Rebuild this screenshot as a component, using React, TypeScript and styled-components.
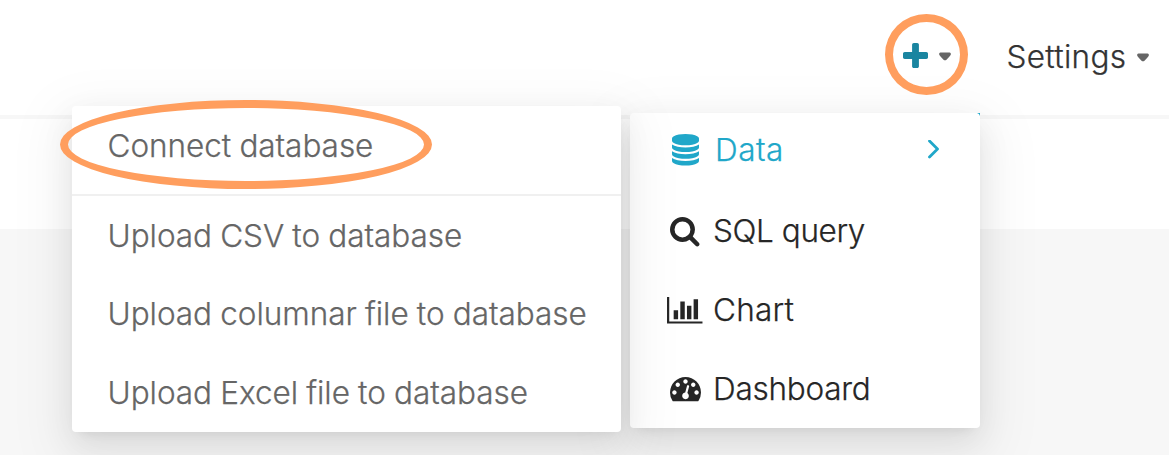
import React from "react";
import styled, { createGlobalStyle } from "styled-components";

const GlobalStyle = createGlobalStyle`
  * { box-sizing: border-box; }
  body {
    margin: 0;
    background: #f7f7f7;
    font-family: Inter, "Liberation Sans", sans-serif;
    font-weight: 300;
    -webkit-text-stroke: 0.25px currentColor;
    overflow: hidden;
  }
`;

const Page = styled.div`
  position: relative;
  width: 1169px;
  height: 455px;
  overflow: hidden;
  background: #f7f7f7;
`;

const NavBar = styled.header`
  display: flex;
  justify-content: flex-end;
  height: 119px;
  padding: 0 20px 4px 0;
  background: #fff;
  border-bottom: 4px solid #f7f7f7;
`;

const SubHeader = styled.div`
  height: 110px;
  background: #fff;
`;

const NavItem = styled.div<{ $gap: number; $width: number; $height: number }>`
  display: flex;
  align-items: center;
  gap: ${(p) => p.$gap}px;
  width: ${(p) => p.$width}px;
  height: ${(p) => p.$height}px;
  font-size: 31.5px;
  line-height: 40px;
  color: #333;
`;

const NavLabel = styled.span`
  flex: 1;
  letter-spacing: 0.3px;
`;

const Menu = styled.nav<{ $left: number; $top: number; $width: number; $height: number }>`
  position: absolute;
  left: ${(p) => p.$left}px;
  top: ${(p) => p.$top}px;
  width: ${(p) => p.$width}px;
  height: ${(p) => p.$height}px;
  background: #fff;
  border-radius: 4px;
  box-shadow: 0 6px 12px -8px rgba(0, 0, 0, 0.12), 0 12px 32px rgba(0, 0, 0, 0.08),
    0 18px 56px 16px rgba(0, 0, 0, 0.05);
`;

const MenuCorner = styled.span`
  position: absolute;
  left: 977px;
  top: 113px;
  width: 3px;
  height: 3px;
  background: #20a7c9;
  clip-path: polygon(0 0, 100% 0, 100% 100%, 67% 33%);
`;

const MenuRow = styled.div<{ $height: number; $active?: boolean }>`
  display: flex;
  align-items: center;
  height: ${(p) => p.$height}px;
  padding: 0 40px 0 37px;
  font-size: 31.5px;
  color: ${(p) => (p.$active ? "#20a7c9" : "#262626")};
`;

const IconSlot = styled.span`
  display: flex;
  justify-content: center;
  width: 36px;
  margin-right: 10px;
`;

const RowLabel = styled.span<{ $indent?: number; $tracking?: number; $rise?: number }>`
  flex: 1;
  padding: 0 0 ${(p) => p.$rise ?? 2}px ${(p) => p.$indent ?? 0}px;
  letter-spacing: ${(p) => p.$tracking ?? 0}px;
  white-space: nowrap;
`;

const SubRow = styled.div<{ $height: number; $divided?: boolean }>`
  display: flex;
  align-items: center;
  height: ${(p) => p.$height}px;
  padding: 0 0 ${(p) => (p.$divided ? 9 : 1)}px 35.5px;
  font-size: 31.5px;
  letter-spacing: -0.04px;
  word-spacing: -0.6px;
  color: #666;
  white-space: nowrap;
  border-bottom: ${(p) => (p.$divided ? "2px solid #f0f0f0" : "0")};
`;

const Highlight = styled.span<{ $left: number; $top: number; $width: number; $height: number }>`
  position: absolute;
  left: ${(p) => p.$left}px;
  top: ${(p) => p.$top}px;
  width: ${(p) => p.$width}px;
  height: ${(p) => p.$height}px;
  border: 8px solid #ff9e5e;
  border-radius: 50%;
`;

const Glyph = styled.svg`
  display: block;
  flex: none;
  fill: currentColor;
`;

const PlusGlyph = styled(Glyph)`
  color: #1a85a0;
`;

const CaretGlyph = styled(Glyph)`
  margin-top: 2px;
  color: #666;
`;

const Plus = () => (
  <PlusGlyph width="25" height="25" viewBox="0 192 1408 1408">
    <path d="M1408 800v192q0 40-28 68t-68 28h-416v416q0 40-28 68t-68 28h-192q-40 0-68-28t-28-68v-416h-416q-40 0-68-28t-28-68v-192q0-40 28-68t68-28h416v-416q0-40 28-68t68-28h192q40 0 68 28t28 68v416h416q40 0 68 28t28 68z" />
  </PlusGlyph>
);

const Caret = () => (
  <CaretGlyph width="12" height="9" viewBox="0 0 12 9">
    <path d="M1.400 0.500H10.600Q12 0.600 11.900 2.200Q11.600 3.400 10.700 4.300L7.500 7.700Q6 9 4.500 7.700L1.300 4.300Q0.400 3.400 0.100 2.200Q0 0.600 1.400 0.500Z" />
  </CaretGlyph>
);

const Database = () => (
  <Glyph width="27" height="31.5" viewBox="0 0 1536 1792">
    <path d="M768 768q237 0 443-43t325-127v170q0 69-103 128t-280 93.500-385 34.500-385-34.500-280-93.500-103-128v-170q119 84 325 127t443 43zm0 768q237 0 443-43t325-127v170q0 69-103 128t-280 93.500-385 34.500-385-34.500-280-93.500-103-128v-170q119 84 325 127t443 43zm0-384q237 0 443-43t325-127v170q0 69-103 128t-280 93.500-385 34.500-385-34.500-280-93.500-103-128v-170q119 84 325 127t443 43zm0-1152q208 0 385 34.500t280 93.500 103 128v128q0 69-103 128t-280 93.500-385 34.500-385-34.500-280-93.500-103-128v-128q0-69 103-128t280-93.500 385-34.500z" />
  </Glyph>
);

const Search = () => (
  <Glyph width="29.5" height="29.5" viewBox="0 128 1664 1664">
    <path d="M1152 832q0-185-131.500-316.500t-316.500-131.500-316.500 131.500-131.500 316.500 131.500 316.500 316.500 131.500 316.500-131.500 131.500-316.500zm512 832q0 52-38 90t-90 38q-54 0-90-38l-343-342q-179 124-399 124-143 0-273.500-55.500t-225-150-150-225-55.500-273.500 55.500-273.500 150-225 225-150 273.500-55.500 273.500 55.500 225 150 150 225 55.500 273.500q0 220-124 399l343 343q37 37 37 90z" />
  </Glyph>
);

const BarChart = () => (
  <Glyph width="35.5" height="26.6" viewBox="0 128 2048 1536">
    <path d="M640 896v512h-256v-512h256zm384-512v1024h-256v-1024h256zm1024 1152v128h-2048v-1536h128v1408h1920zm-640-896v768h-256v-768h256zm384-384v1152h-256v-1152h256z" />
  </Glyph>
);

const Gauge = () => (
  <Glyph width="31" height="24.4" viewBox="0 256 1792 1408">
    <path d="M384 1152q0-53-37.500-90.500t-90.500-37.500-90.500 37.500-37.500 90.500 37.500 90.500 90.500 37.500 90.500-37.500 37.500-90.500zm192-448q0-53-37.500-90.500t-90.500-37.500-90.500 37.500-37.500 90.500 37.500 90.500 90.500 37.500 90.500-37.500 37.500-90.500zm428 481l101-382q6-26-7.500-48.500t-38.500-29.500-48 6.500-30 39.500l-101 382q-60 5-107 43.500t-63 98.500q-20 77 20 146t117 89 146-20 89-117q16-60-6-117t-72-91zm660-33q0-53-37.500-90.500t-90.500-37.500-90.500 37.500-37.500 90.500 37.500 90.500 90.500 37.500 90.500-37.500 37.500-90.500zm-640-640q0-53-37.500-90.500t-90.500-37.500-90.500 37.500-37.500 90.500 37.500 90.500 90.500 37.500 90.500-37.500 37.500-90.500zm448 192q0-53-37.500-90.500t-90.500-37.500-90.500 37.500-37.500 90.500 37.500 90.500 90.500 37.500 90.500-37.500 37.500-90.500zm320 448q0 261-141 483-19 29-54 29h-1402q-35 0-54-29-141-221-141-483 0-182 71-348t191-286 286-191 348-71 348 71 286 191 191 286 71 348z" />
  </Glyph>
);

const Chevron = () => (
  <svg width="13" height="20" viewBox="0 1.500 13 20" fill="none" stroke="currentColor" strokeWidth="2.8" strokeLinecap="round" strokeLinejoin="round">
    <path d="M2.500 2.500L10.500 10.500L2.500 18.500" />
  </svg>
);

export default function App() {
  return (
    <Page>
      <GlobalStyle />
      <NavBar>
        <NavItem $gap={11} $width={104} $height={111}>
          <Plus />
          <Caret />
        </NavItem>
        <NavItem $gap={8} $width={142.5} $height={113}>
          <NavLabel>Settings</NavLabel>
          <Caret />
        </NavItem>
      </NavBar>
      <SubHeader />

      <Menu $left={630} $top={113} $width={350} $height={315}>
        <MenuRow $height={74} $active>
          <IconSlot><Database /></IconSlot>
          <RowLabel $indent={2} $tracking={0.5} $rise={1}>Data</RowLabel>
          <Chevron />
        </MenuRow>
        <MenuRow $height={90}>
          <IconSlot><Search /></IconSlot>
          <RowLabel $tracking={-0.4} $rise={4}>SQL query</RowLabel>
        </MenuRow>
        <MenuRow $height={67}>
          <IconSlot><BarChart /></IconSlot>
          <RowLabel $tracking={0.2}>Chart</RowLabel>
        </MenuRow>
        <MenuRow $height={91}>
          <IconSlot><Gauge /></IconSlot>
          <RowLabel $tracking={-0.25}>Dashboard</RowLabel>
        </MenuRow>
      </Menu>
      <MenuCorner />

      <Menu $left={72} $top={106} $width={549} $height={326}>
        <SubRow $height={90} $divided>Connect database</SubRow>
        <SubRow $height={79}>Upload CSV to database</SubRow>
        <SubRow $height={77}>Upload columnar file to database</SubRow>
        <SubRow $height={82}>Upload Excel file to database</SubRow>
      </Menu>

      <Highlight $left={885} $top={14} $width={83} $height={81} />
      <Highlight $left={60} $top={100} $width={372} $height={89} />
    </Page>
  );
}
